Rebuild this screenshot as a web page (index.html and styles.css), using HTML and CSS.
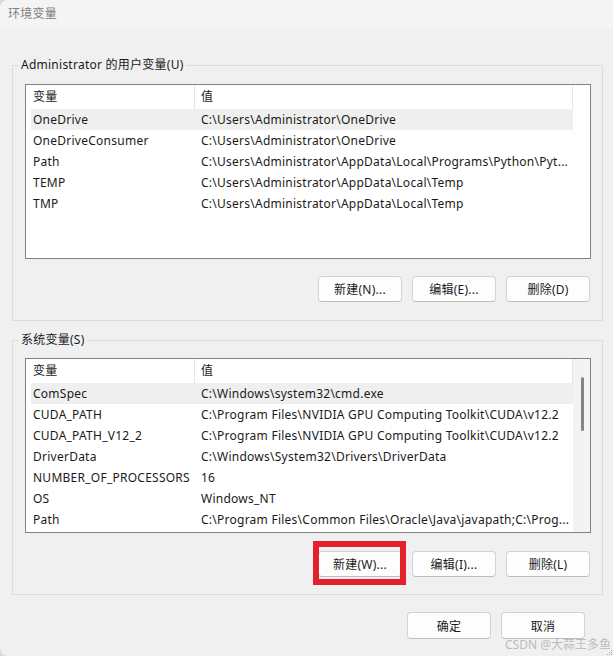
FILE: index.html
```html
<!DOCTYPE HTML>
<html>

<head>
    <meta charset="utf-8">
    <link rel="stylesheet" href="styles.css">
</head>

<body>
    <div class="window">
        <div class="titlebar">环境变量</div>

        <div class="content">
            <fieldset class="group">
                <legend>Administrator 的用户变量(U)</legend>
                <div class="group-body">
                    <div class="list">
                        <div class="cols">
                            <div class="row head"><span class="name">变量</span><span class="value">值</span></div>
                            <div class="row selected"><span class="name">OneDrive</span><span class="value">C:\Users\Administrator\OneDrive</span></div>
                            <div class="row"><span class="name">OneDriveConsumer</span><span class="value">C:\Users\Administrator\OneDrive</span></div>
                            <div class="row"><span class="name">Path</span><span class="value">C:\Users\Administrator\AppData\Local\Programs\Python\Pyt...</span></div>
                            <div class="row"><span class="name">TEMP</span><span class="value">C:\Users\Administrator\AppData\Local\Temp</span></div>
                            <div class="row"><span class="name">TMP</span><span class="value">C:\Users\Administrator\AppData\Local\Temp</span></div>
                        </div>
                        <div class="scroll-space"></div>
                    </div>
                    <div class="buttons">
                        <button class="btn">新建(N)...</button>
                        <button class="btn">编辑(E)...</button>
                        <button class="btn">删除(D)</button>
                    </div>
                </div>
            </fieldset>

            <fieldset class="group second">
                <legend>系统变量(S)</legend>
                <div class="group-body">
                    <div class="list">
                        <div class="cols">
                            <div class="row head"><span class="name">变量</span><span class="value">值</span></div>
                            <div class="row selected"><span class="name">ComSpec</span><span class="value">C:\Windows\system32\cmd.exe</span></div>
                            <div class="row"><span class="name">CUDA_PATH</span><span class="value">C:\Program Files\NVIDIA GPU Computing Toolkit\CUDA\v12.2</span></div>
                            <div class="row"><span class="name">CUDA_PATH_V12_2</span><span class="value">C:\Program Files\NVIDIA GPU Computing Toolkit\CUDA\v12.2</span></div>
                            <div class="row"><span class="name">DriverData</span><span class="value">C:\Windows\System32\Drivers\DriverData</span></div>
                            <div class="row"><span class="name">NUMBER_OF_PROCESSORS</span><span class="value">16</span></div>
                            <div class="row"><span class="name">OS</span><span class="value">Windows_NT</span></div>
                            <div class="row"><span class="name">Path</span><span class="value">C:\Program Files\Common Files\Oracle\Java\javapath;C:\Prog...</span></div>
                        </div>
                        <div class="scrollbar"><div class="thumb"></div></div>
                    </div>
                    <div class="buttons lower">
                        <span class="marked"><button class="btn">新建(W)...</button></span>
                        <button class="btn">编辑(I)...</button>
                        <button class="btn">删除(L)</button>
                    </div>
                </div>
            </fieldset>

            <div class="footer">
                <button class="btn tall">确定</button>
                <button class="btn tall">取消</button>
            </div>
        </div>

        <div class="watermark">CSDN @大蒜王多鱼</div>
        <svg class="grip" width="7" height="7" viewBox="0 0 7 7">
            <rect x="5" y="1" width="1" height="1" fill="#a8a8a8"/>
            <rect x="3" y="3" width="1" height="1" fill="#a8a8a8"/>
            <rect x="5" y="3" width="1" height="1" fill="#a8a8a8"/>
            <rect x="1" y="5" width="1" height="1" fill="#a8a8a8"/>
            <rect x="3" y="5" width="1" height="1" fill="#a8a8a8"/>
            <rect x="5" y="5" width="1" height="1" fill="#a8a8a8"/>
        </svg>
    </div>
</body>

</html>
```

FILE: styles.css
```css
/* dialog shell */

html,
body {
    margin: 0;
    background: #d9d9d9;
}

.window {
    position: relative;
    width: 613px;
    height: 656px;
    background: #f0f0f0;
    border-radius: 8px 0 0 8px;
    overflow: hidden;
    font-family: "Noto Sans", "Noto Sans CJK SC", sans-serif;
    font-size: 12px;
    letter-spacing: 0.25px;
    color: #1a1a1a;
}

.titlebar {
    height: 29px;
    line-height: 28px;
    padding-left: 8px;
    background: #f4f4f4;
    color: #808080;
}

.content {
    padding-top: 28px;
}

/* group boxes */

.group {
    margin: 0 10px 0 12px;
    padding: 0;
    border: 1px solid #dcdcdc;
    min-width: 0;
}

.group legend {
    margin-left: 6px;
    padding: 0 2px;
    line-height: 16px;
}

.group-body {
    padding: 11px 11px 18px 12px;
}

.second {
    margin-top: 11px;
}

.second .group-body {
    padding-top: 10px;
    padding-bottom: 17px;
}

/* list views */

.list {
    display: flex;
    height: 175px;
    box-sizing: border-box;
    border: 1px solid #828282;
    background: #fff;
    overflow: hidden;
}

.cols {
    width: 542px;
    padding-left: 5px;
}

.row {
    display: grid;
    grid-template-columns: 164px 378px;
    height: 21px;
    line-height: 21px;
    white-space: nowrap;
}

.row span {
    overflow: hidden;
}

.row .name {
    padding-left: 2px;
}

.row .value {
    padding-left: 6px;
}

.row.head {
    height: 24px;
    line-height: 24px;
}

.row.head .name {
    border-right: 1px solid #e5e5e5;
}

.row.head .value {
    border-right: 1px solid #e5e5e5;
}

.row.selected {
    background: #efefef;
}

.scroll-space {
    width: 18px;
}

.scrollbar {
    width: 18px;
    background: #f3f3f3;
}

.thumb {
    width: 3px;
    height: 54px;
    margin: 18px 0 0 8px;
    border-radius: 2px;
    background: #858585;
}

/* buttons */

.buttons {
    display: flex;
    justify-content: flex-end;
    gap: 10px;
    margin: 17px 1px 0 0;
}

.buttons.lower {
    margin-top: 18px;
}

.btn {
    width: 84px;
    height: 26px;
    padding: 0;
    border: 1px solid #d2d2d2;
    border-bottom-color: #bdbdbd;
    border-radius: 4px;
    background: #fdfdfd;
    font: inherit;
    letter-spacing: inherit;
    color: #1a1a1a;
}

.btn.tall {
    height: 27px;
}

.marked {
    position: relative;
    display: block;
}

.marked .btn {
    display: block;
}

.marked::after {
    content: "";
    position: absolute;
    left: -5px;
    right: -4px;
    top: -10px;
    bottom: -8px;
    border: 6px solid #e3212a;
}

.footer {
    display: flex;
    justify-content: flex-end;
    gap: 10px;
    margin-top: 17px;
    padding-right: 28px;
}

/* screenshot overlays */

.watermark {
    position: absolute;
    left: 505px;
    top: 637px;
    line-height: 16px;
    letter-spacing: 0;
    color: rgba(140, 140, 140, 0.55);
    white-space: nowrap;
}

.grip {
    position: absolute;
    right: 0;
    bottom: 0;
}
```
